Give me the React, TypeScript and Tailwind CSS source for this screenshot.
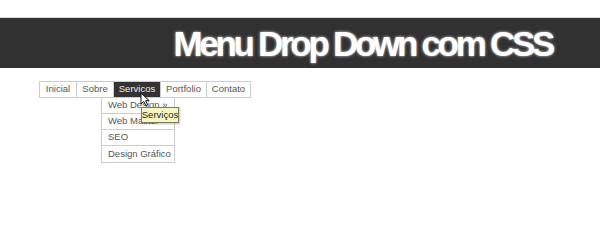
import React from 'react';

// Top-level nav items; "Servicos" is the hovered one with the open submenu
const menuItems = [
  { label: 'Inicial', width: 'w-[36px]' },
  { label: 'Sobre', width: 'w-[37px]' },
  { label: 'Servicos', width: 'w-[47px]', active: true },
  { label: 'Portfolio', width: 'w-[46px]' },
  { label: 'Contato', width: 'w-[44px]' },
];

const subItems = ['Web Design »', 'Web Master', 'SEO', 'Design Gráfico'];

const Cursor: React.FC = () => (
  <svg
    className="absolute left-[140px] top-[92px]"
    width="11"
    height="15"
    viewBox="0 0 11 15"
  >
    <path
      d="M1 1 L1 12 L3.8 9.4 L5.8 13.6 L7.6 12.8 L5.7 8.7 L9.2 8.7 Z"
      fill="#ffffff"
      stroke="#111111"
      strokeWidth="1"
      strokeLinejoin="round"
    />
  </svg>
);

const App: React.FC = () => {
  return (
    <div className="relative w-[600px] h-[212px] overflow-hidden bg-white font-['Liberation_Sans',Arial,sans-serif]">
      <header className="mt-[17px] h-[51px] bg-[#313131] border-t border-[#d9d9d9] flex items-center justify-end pr-[48px]">
        <h1 className="text-[35px] font-bold tracking-[-3.3px] leading-none text-white [text-shadow:0_0_3px_rgba(255,255,255,0.85)]">
          Menu Drop Down com CSS
        </h1>
      </header>

      <nav className="mt-[13px] ml-[39px]">
        <ul className="flex w-fit border border-[#cccccc] bg-white">
          {menuItems.map((item, i) => (
            <li
              key={item.label}
              className={`relative h-[15px] ${item.width} ${i > 0 ? 'border-l border-[#cccccc]' : ''}`}
            >
              <div
                className={`flex h-full items-center justify-center text-[9.5px] ${
                  item.active ? 'bg-[#333333] text-[#eeeeee]' : 'text-[#555555]'
                }`}
              >
                {item.label}
              </div>
              {item.active && (
                <ul className="absolute left-[-13px] top-[15px] w-[74px] border border-[#cccccc] bg-white divide-y divide-[#cccccc]">
                  {subItems.map((sub) => (
                    <li
                      key={sub}
                      className="h-[16px] flex items-center pl-[6px] text-[9.5px] text-[#555555] whitespace-nowrap"
                    >
                      {sub}
                    </li>
                  ))}
                </ul>
              )}
            </li>
          ))}
        </ul>
      </nav>

      {/* browser tooltip over the hovered item */}
      <div className="absolute left-[141px] top-[107px] h-[16px] w-[38px] flex items-center justify-center border border-[#7d7d5c] bg-[#f8f6c0] text-[9.5px] text-[#222222] shadow-[1px_1px_2px_rgba(0,0,0,0.25)]">
        Serviços
      </div>

      <Cursor />
    </div>
  );
};

export default App;
